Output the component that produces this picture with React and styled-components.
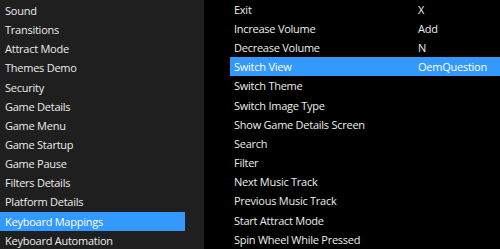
import React from "react";
import styled, { createGlobalStyle } from "styled-components";

const GlobalStyle = createGlobalStyle`
  html, body {
    margin: 0;
    padding: 0;
    background: #000;
  }
  body {
    font-family: "Open Sans", "Noto Sans", sans-serif;
    overflow: hidden;
  }
`;

const Screen = styled.div`
  display: flex;
  width: 500px;
  height: 249px;
  overflow: hidden;
  color: #f2f2f2;
  font-size: 11px;
  letter-spacing: -0.25px;
`;

const Sidebar = styled.div`
  width: 204px;
  flex-shrink: 0;
  background: #1f1f1f;
  padding-top: 1px;
  box-sizing: border-box;
`;

const SideItem = styled.div`
  width: 185px;
  height: 19.15px;
  display: flex;
  align-items: center;
  padding-left: 5px;
  box-sizing: border-box;
  white-space: nowrap;
  background: ${(p) => (p.$active ? "#3399ff" : "transparent")};
  color: ${(p) => (p.$active ? "#ffffff" : "#ececec")};
`;

const Mappings = styled.div`
  flex: 1;
  background: #000;
  padding-left: 26px;
  margin-top: -0.5px;
`;

const MapRow = styled.div`
  display: grid;
  grid-template-columns: 184px 1fr;
  height: 19.2px;
  align-items: center;
  background: ${(p) => (p.$active ? "#3399ff" : "transparent")};
  color: ${(p) => (p.$active ? "#ffffff" : "#ececec")};
  white-space: nowrap;
`;

const Cell = styled.span`
  padding-left: 4px;
`;

const sections = [
  "Sound",
  "Transitions",
  "Attract Mode",
  "Themes Demo",
  "Security",
  "Game Details",
  "Game Menu",
  "Game Startup",
  "Game Pause",
  "Filters Details",
  "Platform Details",
  "Keyboard Mappings",
  "Keyboard Automation",
];

const mappings = [
  ["Exit", "X"],
  ["Increase Volume", "Add"],
  ["Decrease Volume", "N"],
  ["Switch View", "OemQuestion"],
  ["Switch Theme", ""],
  ["Switch Image Type", ""],
  ["Show Game Details Screen", ""],
  ["Search", ""],
  ["Filter", ""],
  ["Next Music Track", ""],
  ["Previous Music Track", ""],
  ["Start Attract Mode", ""],
  ["Spin Wheel While Pressed", ""],
];

export default function App() {
  return (
    <Screen>
      <GlobalStyle />
      <Sidebar>
        {sections.map((s) => (
          <SideItem key={s} $active={s === "Keyboard Mappings"}>
            {s}
          </SideItem>
        ))}
      </Sidebar>
      <Mappings>
        {mappings.map(([name, key]) => (
          <MapRow key={name} $active={name === "Switch View"}>
            <Cell>{name}</Cell>
            <Cell>{key}</Cell>
          </MapRow>
        ))}
      </Mappings>
    </Screen>
  );
}
